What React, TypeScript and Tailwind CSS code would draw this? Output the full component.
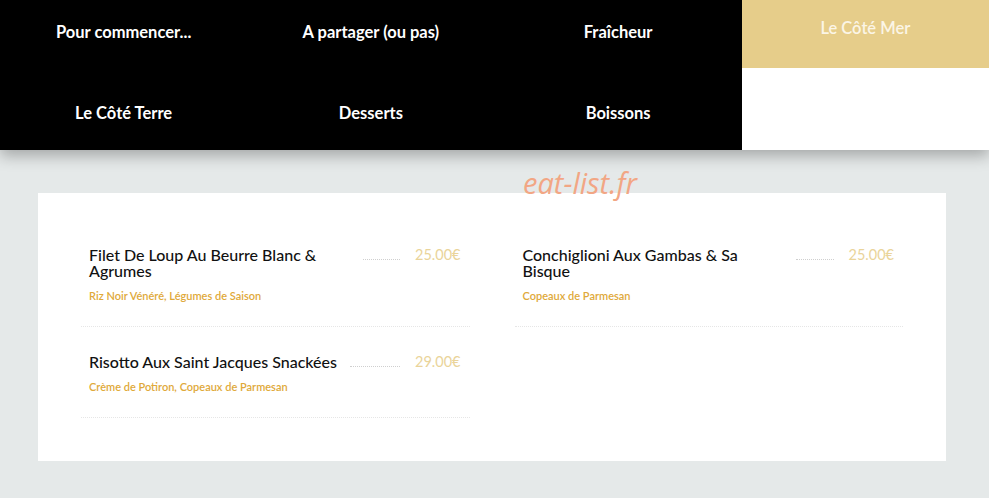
import React from "react";

const navTop = ["Pour commencer...", "A partager (ou pas)", "Fraîcheur"];
const navBottom = ["Le Côté Terre", "Desserts", "Boissons"];

const dishes = [
  { name: "Filet De Loup Au Beurre Blanc & Agrumes", desc: "Riz Noir Vénéré, Légumes de Saison", price: "25.00€" },
  { name: "Conchiglioni Aux Gambas & Sa Bisque", desc: "Copeaux de Parmesan", price: "25.00€" },
  { name: "Risotto Aux Saint Jacques Snackées", desc: "Crème de Potiron, Copeaux de Parmesan", price: "29.00€" },
];

function Dish({ name, desc, price }: { name: string; desc: string; price: string }) {
  return (
    <div className="px-2 pt-[27px] pb-[24px] border-b border-dotted border-[#e6e6e6]">
      <div className="flex items-start">
        <div className="max-w-[70%] text-[16px] leading-[16px] font-medium text-[#111]">{name}</div>
        <div className="flex-1 ml-[13px] mr-[15px] mt-[12px] border-b border-dotted border-[#cfcfcf]" />
        <div className="text-[14.5px] leading-[16px] text-[#ead49a] pr-[1px]">{price}</div>
      </div>
      <div className="mt-[10px] text-[11px] leading-[13px] font-semibold text-[#e0a93a]">{desc}</div>
    </div>
  );
}

export default function App() {
  return (
    <div className="relative w-[989px] h-[498px] bg-[#e5e9e9] overflow-hidden" style={{ fontFamily: "Lato, 'Noto Sans', sans-serif" }}>
      <div className="relative z-10 grid grid-cols-4 shadow-[0_6px_14px_rgba(0,0,0,0.28)]">
        {navTop.map((t) => (
          <div key={t} className="h-[68px] bg-black flex items-center justify-center pb-1 text-white text-[16.5px] font-bold">{t}</div>
        ))}
        <div className="h-[68px] bg-[#e6cd8a] flex items-center justify-center pb-3 text-[#fbf5e6] text-[16.5px] font-semibold">Le Côté Mer</div>
        {navBottom.map((t) => (
          <div key={t} className="h-[82px] bg-black flex items-center justify-center pt-2 text-white text-[16.5px] font-bold">{t}</div>
        ))}
        <div className="h-[82px] bg-white" />
      </div>

      <div className="ml-[38px] mr-[43px] mt-[43px] h-[268px] bg-white px-[43px] pt-[27px]">
        <div className="grid grid-cols-2 gap-x-[45px]">
          {dishes.map((d) => (
            <Dish key={d.name} {...d} />
          ))}
        </div>
      </div>

      <div className="absolute left-[523px] top-[161px] z-20 text-[29px] italic text-[#f2a684]" style={{ fontFamily: "'Open Sans', sans-serif" }}>
        eat-list.fr
      </div>
    </div>
  );
}
